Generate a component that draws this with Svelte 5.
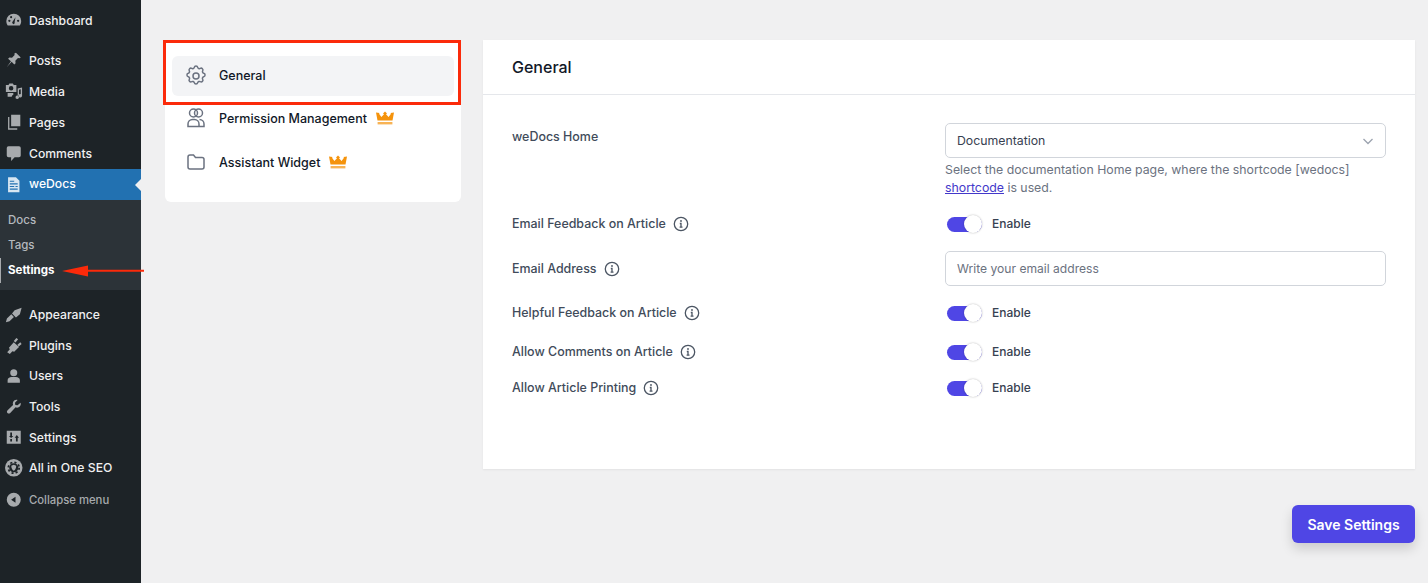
<script>
	const topItems = [{ label: 'Dashboard', icon: 'dash' }];
	const contentItems = [
		{ label: 'Posts', icon: 'pin' },
		{ label: 'Media', icon: 'media' },
		{ label: 'Pages', icon: 'pages' },
		{ label: 'Comments', icon: 'comment' }
	];
	const lowerItems = [
		{ label: 'Appearance', icon: 'brush' },
		{ label: 'Plugins', icon: 'plug' },
		{ label: 'Users', icon: 'user' },
		{ label: 'Tools', icon: 'wrench' },
		{ label: 'Settings', icon: 'sliders' },
		{ label: 'All in One SEO', icon: 'seo' }
	];
	const wpIcons = {
		dash: 'M10 3a8.500 8.500 0 0 0-8.500 8.500c0 2 .6 3.700 1.600 5h13.800c1-1.300 1.600-3 1.600-5A8.500 8.500 0 0 0 10 3zM5 12.500a1.300 1.300 0 1 1 0-2.600 1.300 1.300 0 0 1 0 2.600zM7 8.200a1.200 1.200 0 1 1 0-2.400 1.200 1.200 0 0 1 0 2.400zM10 15a1.800 1.800 0 0 1-1.200-3.100L12 7l-1 5.700A1.800 1.800 0 0 1 10 15zM15 12.500a1.300 1.300 0 1 1 0-2.600 1.300 1.300 0 0 1 0 2.600z',
		pin: 'M12.500 2l5.500 5.500-1.500.8-1.700-.3-3 3 .3 3-1.500 1.500-3-3.300L2 18.500l4.800-6.700-3.300-3 1.500-1.500 3 .3 3-3-.3-1.700z',
		media: 'M1 3.500h3l1-1.700h4l1 1.700h3v8H1zM7 4.600a2.600 2.600 0 1 0 0 5.200 2.600 2.600 0 0 0 0-5.200zM14.500 7.500l5-1.200v9.500a2 2 0 1 1-1.500-1.900V8.300l-2 .5v8.700a2 2 0 1 1-1.500-1.900zM3 12.500h6.500v2.100a2.300 2.300 0 0 0-1.800 2.200H3z',
		pages: 'M7 2h10.500v13H7zM5 4.500v13h9V19H3.500V4.500z',
		comment: 'M4 2.500h12a2 2 0 0 1 2 2v8.500a2 2 0 0 1-2 2h-5l-4 4.500V15H4a2 2 0 0 1-2-2V4.500a2 2 0 0 1 2-2z',
		brush: 'M1 18.500l1.200-4.300 5-4.700 3 3-5 4.800zM8 8.500l3-3.700 8-2.800-2 7.500-4.500 3.500z',
		plug: 'M2.500 18.500l3-3.500-1-1.500 5.500-6.500 6 5.500-5.500 5.500-2-.5-3 3zM10 5.800l3-3.500 2 1.500-3 3.500zM14.200 10l3.300-3 1.500 2-3.300 3z',
		user: 'M10 2.500a4 4 0 0 1 4 4.500c-.2 2-1.500 3.500-4 3.500S6.200 9 6 7a4 4 0 0 1 4-4.500zM3 18v-3c0-2 2-3.500 4.500-3.500h5c2.500 0 4.500 1.500 4.500 3.500v3z',
		wrench: 'M17.800 5.500c.7 2-.1 4.200-2.200 5.200-1.200.5-2.500.5-3.500 0L6 17c-1 1-2.300 1-3.200.2-.9-1-.8-2.200.2-3.200l6.200-6c-.5-1.200-.4-2.500.2-3.700 1-1.800 3-2.700 5-2l-3 3 .4 2.600 2.500.5z',
		sliders: 'M2 3h16v15H2zM6 5v4H4.500L7 11.500 9.500 9H8V5zM13 15.500h1.500V11H16l-2.500-3-2.500 3h1.500v4.500zM6 12.500v3h2v-3z',
		back: 'M10 2a8 8 0 1 0 0 16 8 8 0 0 0 0-16zm2 4.500v7L7 10z'
	};
	const rows = [
		{ label: 'Helpful Feedback on Article', wide: false },
		{ label: 'Allow Comments on Article', wide: true },
		{ label: 'Allow Article Printing', wide: false }
	];
</script>

{#snippet wpIcon(name)}
	<svg class="wp-icon" viewBox="0 0 20 20" aria-hidden="true">
		{#if name === 'seo'}
			<circle cx="10" cy="10" r="10" />
			<circle class="seo-teeth" cx="10" cy="10" r="6.200" />
			<circle class="seo-core" cx="10" cy="10" r="5.200" />
			<path d="M10 6.500l2.800 1.200c0 2.800-1 4.700-2.800 5.800-1.800-1.100-2.800-3-2.800-5.800z" />
		{:else}
			<path fill-rule="evenodd" d={wpIcons[name]} />
		{/if}
	</svg>
{/snippet}

{#snippet menuItem(item)}
	<li class="menu-item">
		{@render wpIcon(item.icon)}
		<span>{item.label}</span>
	</li>
{/snippet}

{#snippet crown()}
	<svg class="crown" viewBox="0 0 18 14" aria-hidden="true">
		<path d="M9 0.500l2 1.900-1 .9 2.600 2.600L15 2.800l-.6-.8L18 1.500l-1.500 8h-15L0 1.500 3.600 2l-.6.800L5.400 5.900 8 3.300l-1-.9z" />
		<rect x="1.600" y="11" width="14.800" height="2.400" opacity="0.7" />
	</svg>
{/snippet}

{#snippet info()}
	<svg class="info" viewBox="0 0 16 16" aria-hidden="true">
		<circle cx="8" cy="8" r="6.700" />
		<path d="M6.800 7.500H8v3.600M6.600 11.200h2.900" />
		<circle class="dot" cx="8" cy="5" r="0.900" />
	</svg>
{/snippet}

{#snippet toggle()}
	<div class="toggle-wrap">
		<span class="toggle"><span class="knob"></span></span>
		<span class="toggle-label">Enable</span>
	</div>
{/snippet}

<div class="page">
	<aside class="sidebar">
		<ul class="menu first">
			{#each topItems as item}
				{@render menuItem(item)}
			{/each}
		</ul>
		<ul class="menu group">
			{#each contentItems as item}
				{@render menuItem(item)}
			{/each}
		</ul>
		<div class="current">
			<svg class="wp-icon doc" viewBox="0 0 20 20" aria-hidden="true">
				<path d="M3.500 1.500h9L16.500 5.500v13h-13z" />
				<path class="doc-lines" d="M5.500 6h5M5.500 9h9M5.500 12h5M12 12h2.500M5.500 15h9" />
			</svg>
			<span>weDocs</span>
		</div>
		<ul class="submenu">
			<li>Docs</li>
			<li>Tags</li>
			<li class="active">Settings</li>
		</ul>
		<ul class="menu lower">
			{#each lowerItems as item}
				{@render menuItem(item)}
			{/each}
		</ul>
		<div class="collapse">
			{@render wpIcon('back')}
			<span>Collapse menu</span>
		</div>
	</aside>

	<main class="content">
		<div class="columns">
			<nav class="tabs">
				<div class="tab selected">
					<svg class="tab-icon" viewBox="0 0 24 24" aria-hidden="true">
						<path d="M10.300 3.300c.4-1.800 3-1.800 3.400 0a1.700 1.700 0 0 0 2.600 1.100c1.500-.9 3.300.8 2.400 2.400a1.700 1.700 0 0 0 1 2.500c1.800.4 1.800 3 0 3.400a1.700 1.700 0 0 0-1 2.600c.9 1.500-.9 3.300-2.400 2.400a1.700 1.700 0 0 0-2.600 1c-.4 1.800-3 1.800-3.400 0a1.700 1.700 0 0 0-2.600-1c-1.500.9-3.300-.9-2.400-2.400a1.700 1.700 0 0 0-1-2.600c-1.800-.4-1.800-3 0-3.400a1.700 1.700 0 0 0 1-2.500c-.9-1.600.9-3.300 2.400-2.400a1.700 1.700 0 0 0 2.600-1.100z" />
						<circle cx="12" cy="12" r="3" />
					</svg>
					<span>General</span>
				</div>
				<div class="tab">
					<svg class="tab-icon" viewBox="0 0 24 24" aria-hidden="true">
						<circle cx="9.500" cy="7" r="4" />
						<circle cx="14.500" cy="7" r="4" />
						<path d="M4 20.500v-2.500a4.500 4.500 0 0 1 4.500-4.500h2a4.500 4.500 0 0 1 4.500 4.500v2.500zM15.500 13.500a4.500 4.500 0 0 1 4.500 4.500v2.500h-5" />
					</svg>
					<span>Permission Management</span>
					{@render crown()}
				</div>
				<div class="tab">
					<svg class="tab-icon" viewBox="0 0 24 24" aria-hidden="true">
						<path d="M4 7a2 2 0 0 1 2-2h3.500l2 2.500H18a2 2 0 0 1 2 2V17a2 2 0 0 1-2 2H6a2 2 0 0 1-2-2z" />
					</svg>
					<span>Assistant Widget</span>
					{@render crown()}
				</div>
			</nav>

			<section class="panel">
				<h2>General</h2>
				<div class="form">
					<div class="row home">
						<div class="label">weDocs Home</div>
						<div class="field">
							<div class="select">
								<span>Documentation</span>
								<svg viewBox="0 0 12 12" aria-hidden="true"><path d="M1.500 4l4.500 4.500L10.500 4" /></svg>
							</div>
							<p class="help">
								Select the documentation Home page, where the shortcode [wedocs]
								<a href="#shortcode">shortcode</a> is used.
							</p>
						</div>
					</div>
					<div class="row feedback">
						<div class="label">Email Feedback on Article {@render info()}</div>
						{@render toggle()}
					</div>
					<div class="row address">
						<div class="label">Email Address {@render info()}</div>
						<div class="input">Write your email address</div>
					</div>
					{#each rows as row}
						<div class="row switch" class:wide={row.wide}>
							<div class="label">{row.label} {@render info()}</div>
							{@render toggle()}
						</div>
					{/each}
				</div>
			</section>
		</div>
		<div class="actions">
			<button type="button">Save Settings</button>
		</div>
	</main>

	<!-- annotations drawn over the screenshot -->
	<div class="mark-box"></div>
	<svg class="mark-arrow" viewBox="0 0 82 12" aria-hidden="true">
		<path d="M0 6L26 0.500V4.800H82V6.800H26V11.500z" />
	</svg>
</div>

<style>
	:global(body) {
		margin: 0;
		background: #f0f0f1;
	}

	.page {
		position: relative;
		display: flex;
		height: 583px;
		overflow: hidden;
		background: #f0f0f1;
		font-family: Inter, 'Liberation Sans', sans-serif;
	}

	ul {
		margin: 0;
		padding: 0;
		list-style: none;
	}

	.sidebar {
		flex: 0 0 141px;
		background: #1d2327;
		color: #f0f0f1;
		font-size: 12.200px;
		font-weight: 500;
	}

	.first {
		padding-top: 4.500px;
	}

	.group {
		padding-top: 9px;
	}

	.menu-item {
		display: flex;
		align-items: center;
		gap: 6.500px;
		height: 31px;
		padding-left: 5px;
	}

	.lower .menu-item {
		height: 30.700px;
	}

	.wp-icon {
		flex: none;
		width: 17.500px;
		height: 17.500px;
		fill: #a7aaad;
	}

	.seo-teeth {
		fill: none;
		stroke: #1d2327;
		stroke-width: 2;
		stroke-dasharray: 2.400 2.470;
	}

	.seo-core {
		fill: #1d2327;
	}

	.current {
		display: flex;
		align-items: center;
		gap: 6.500px;
		position: relative;
		height: 31.500px;
		padding-left: 5px;
		background: #2271b1;
		color: #fff;
	}

	.current span {
		margin-bottom: 1px;
	}

	.current::after {
		content: '';
		position: absolute;
		right: 0;
		top: 10px;
		border: 6px solid transparent;
		border-right-color: #f0f0f1;
		border-left-width: 0;
	}

	.doc path:first-child {
		fill: #d7e6f2;
	}

	.doc-lines {
		fill: none;
		stroke: #2271b1;
		stroke-width: 1.300;
	}

	.submenu {
		height: 90px;
		padding-top: 7.500px;
		box-sizing: border-box;
		background: #2c3338;
		color: #b4b9be;
		font-size: 11.500px;
	}

	.submenu li {
		height: 25px;
		line-height: 25px;
		padding-left: 8px;
	}

	.submenu .active {
		padding-left: 7px;
		border-left: 1px solid #a7aaad;
		color: #fff;
		font-weight: 700;
	}

	.lower {
		padding-top: 9px;
	}

	.collapse {
		display: flex;
		align-items: center;
		gap: 6.500px;
		height: 33px;
		padding-left: 5px;
		color: #a7aaad;
		font-size: 11.300px;
	}

	.content {
		flex: 1;
		padding: 40px 13px 0 24px;
		min-width: 0;
	}

	.columns {
		display: flex;
		align-items: flex-start;
		gap: 22px;
	}

	.tabs {
		flex: 0 0 296px;
		box-sizing: border-box;
		height: 162px;
		padding: 16px 7px 0;
		background: #fff;
		border-radius: 6px;
		color: #111827;
		font-size: 12.500px;
		font-weight: 500;
	}

	.tab {
		display: flex;
		align-items: center;
		height: 44px;
		padding-left: 12px;
		border-radius: 6px;
	}

	.tab.selected {
		height: 40px;
		background: #f3f4f6;
	}

	.tab.selected span {
		margin-bottom: 1px;
	}

	.tab-icon {
		flex: none;
		width: 24px;
		height: 24px;
		margin-right: 11px;
		fill: none;
		stroke: #6b7280;
		stroke-width: 1.500;
	}

	.crown {
		width: 18px;
		height: 14px;
		margin-left: 9px;
		fill: #f5930c;
	}

	.panel {
		flex: 1;
		height: 429px;
		background: #fff;
		box-shadow: 0 1px 2px rgba(0, 0, 0, 0.06);
	}

	h2 {
		margin: 0;
		box-sizing: border-box;
		height: 55px;
		padding: 16px 29px 0;
		border-bottom: 1px solid #e5e7eb;
		color: #111827;
		font-size: 16px;
		font-weight: 500;
		line-height: 22px;
	}

	.form {
		padding: 28px 29px 0;
	}

	.row {
		display: grid;
		grid-template-columns: 433px 441px;
		align-items: center;
	}

	.row.home {
		align-items: start;
	}

	.row.home .label {
		padding-top: 5px;
	}

	.row.feedback,
	.row.address,
	.row.switch {
		margin-top: 18px;
	}

	.row.wide {
		margin-top: 21px;
	}

	.label {
		display: flex;
		align-items: center;
		gap: 7px;
		color: #414b5a;
		font-size: 12.450px;
		font-weight: 500;
		line-height: 18px;
	}

	.info {
		width: 16px;
		height: 16px;
		fill: none;
		stroke: #4b5563;
		stroke-width: 1.300;
	}

	.info .dot {
		fill: #4b5563;
		stroke: none;
	}

	.select,
	.input {
		display: flex;
		align-items: center;
		box-sizing: border-box;
		height: 35px;
		padding: 0 11px;
		border: 1px solid #d1d5db;
		border-radius: 5px;
		background: #fff;
		font-size: 12.300px;
	}

	.select {
		justify-content: space-between;
		color: #374151;
	}

	.select svg {
		width: 12px;
		height: 12px;
		fill: none;
		stroke: #9ca3af;
		stroke-width: 1.300;
	}

	.input {
		color: #6b7280;
		font-size: 12.100px;
	}

	.help {
		margin: 3px 0 0;
		color: #6b7280;
		font-size: 12.300px;
		line-height: 18px;
	}

	.help a {
		color: #4338ca;
	}

	.toggle-wrap {
		display: flex;
		align-items: center;
		gap: 10px;
		height: 18px;
	}

	.toggle {
		position: relative;
		width: 35px;
		height: 15px;
		margin-left: 2px;
		border-radius: 8px;
		background: #4f46e5;
	}

	.knob {
		position: absolute;
		right: 0;
		top: -1.500px;
		width: 18px;
		height: 18px;
		border-radius: 50%;
		background: #fff;
		box-shadow: 0 0 2px rgba(0, 0, 0, 0.3);
	}

	.toggle-label {
		margin-bottom: 1px;
		color: #374151;
		font-size: 12px;
		font-weight: 500;
	}

	.actions {
		display: flex;
		justify-content: flex-end;
		margin-top: 36px;
	}

	button {
		width: 123px;
		height: 38px;
		padding: 0;
		border: 0;
		border-radius: 6px;
		background: #4f46e5;
		color: #fff;
		font: 600 14px Inter, 'Liberation Sans', sans-serif;
		box-shadow: 0 6px 12px rgba(0, 0, 0, 0.15);
	}

	.mark-box {
		position: absolute;
		left: 163px;
		top: 40px;
		width: 292px;
		height: 58.500px;
		border: 3px solid #fb2a0a;
	}

	.mark-arrow {
		position: absolute;
		left: 62px;
		top: 265px;
		width: 82px;
		height: 12px;
		fill: #fb2a0a;
	}
</style>
